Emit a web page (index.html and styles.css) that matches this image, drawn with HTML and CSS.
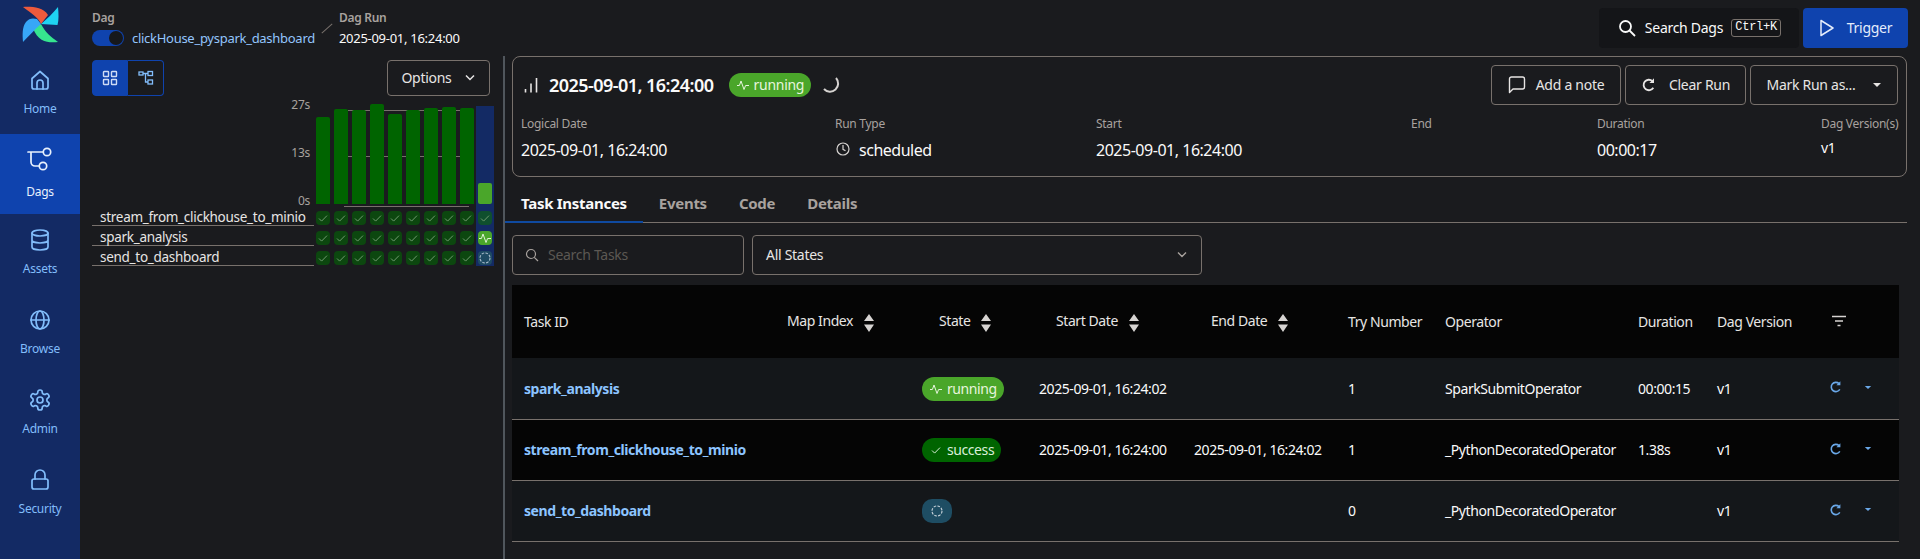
FILE: index.html
```html
<!DOCTYPE html>
<html lang="en">
<head>
    <meta charset="UTF-8">
    <title>clickHouse_pyspark_dashboard - Airflow</title>
    <link rel="stylesheet" href="styles.css">
</head>
<body>
    <svg class="defs" width="0" height="0">
        <symbol id="i-check" viewBox="0 0 14 14"><path d="M3 7.5l2.6 2.6L11 4.6" fill="none" stroke="currentColor" stroke-width="1"/></symbol>
        <symbol id="i-sort" viewBox="0 0 12 20"><path d="M6 1l5 7H1zM1 11.5h10L6 19z" fill="currentColor"/></symbol>
        <symbol id="i-refresh" viewBox="0 0 14 14"><path d="M10.8 9.4A4.6 4.6 0 1 1 10 3.6" fill="none" stroke="currentColor" stroke-width="1.6"/><path d="M11.4 1.2v4h-4z" fill="currentColor"/></symbol>
        <symbol id="i-caret" viewBox="0 0 10 6"><path d="M1 1h8L5 5z" fill="currentColor"/></symbol>
        <symbol id="i-pulse" viewBox="0 0 14 14"><path d="M1 7.5h2.4L5 3l3 8.5 1.6-4h3.4" fill="none" stroke="currentColor" stroke-width="1"/></symbol>
        <symbol id="i-queued" viewBox="0 0 14 14"><circle cx="7" cy="7" r="5" fill="none" stroke="currentColor" stroke-width="1.1" stroke-dasharray="2.6 1.3"/></symbol>
    </svg>

    <nav class="sidebar">
        <div class="logo">
            <svg width="35" height="35" viewBox="0 0 35 35">
                <path d="M35 0C35.6 6 36 13 34.5 18L18 17C24 12 30 6 35 0Z" fill="#1fd3f2"/>
                <path d="M35 35C27 36 15 36 10 21L18 17C22 25 28 30 35 35Z" fill="#36e58f"/>
                <path d="M0 35C-.5 28-1 20 3 15C6 11 10 11 14 12L18 17C12 22 6 29 0 35Z" fill="#37a7f8"/>
                <path d="M0 0C8-.5 20 0 25 8L18 17C15 10 8 6 0 0Z" fill="#ee5a3c"/>
            </svg>
        </div>
        <a class="nav-item">
            <svg width="24" height="24" viewBox="0 0 24 24" class="stroke-icon"><path d="M4 10.5L12 3.5l8 7V19a2 2 0 0 1-2 2H6a2 2 0 0 1-2-2z"/><path d="M9 21v-6a3 3 0 0 1 6 0v6"/></svg>
            <span>Home</span>
        </a>
        <a class="nav-item active">
            <svg width="28" height="28" viewBox="0 0 28 28" class="stroke-icon"><path d="M2 7h15M5 7v10a4 4 0 0 0 4 4h4"/><circle cx="21" cy="7" r="3.7"/><circle cx="17" cy="21" r="3.7"/></svg>
            <span>Dags</span>
        </a>
        <a class="nav-item">
            <svg width="24" height="24" viewBox="0 0 24 24" class="stroke-icon"><ellipse cx="12" cy="5" rx="8" ry="3"/><path d="M4 5v14c0 1.7 3.6 3 8 3s8-1.300 8-3V5M4 12c0 1.700 3.600 3 8 3s8-1.300 8-3"/></svg>
            <span>Assets</span>
        </a>
        <a class="nav-item">
            <svg width="24" height="24" viewBox="0 0 24 24" class="stroke-icon"><circle cx="12" cy="12" r="9"/><ellipse cx="12" cy="12" rx="4" ry="9"/><path d="M3 12h18"/></svg>
            <span>Browse</span>
        </a>
        <a class="nav-item">
            <svg width="24" height="24" viewBox="0 0 24 24" class="stroke-icon"><path d="M12.220 2h-.44a2 2 0 0 0-2 2v.18a2 2 0 0 1-1 1.730l-.43.25a2 2 0 0 1-2 0l-.15-.08a2 2 0 0 0-2.730.73l-.22.38a2 2 0 0 0 .73 2.730l.15.1a2 2 0 0 1 1 1.720v.51a2 2 0 0 1-1 1.740l-.15.09a2 2 0 0 0-.73 2.730l.22.38a2 2 0 0 0 2.730.73l.15-.08a2 2 0 0 1 2 0l.43.25a2 2 0 0 1 1 1.730V20a2 2 0 0 0 2 2h.44a2 2 0 0 0 2-2v-.18a2 2 0 0 1 1-1.730l.43-.25a2 2 0 0 1 2 0l.15.08a2 2 0 0 0 2.730-.73l.22-.39a2 2 0 0 0-.73-2.730l-.15-.08a2 2 0 0 1-1-1.740v-.5a2 2 0 0 1 1-1.740l.15-.09a2 2 0 0 0 .73-2.730l-.22-.38a2 2 0 0 0-2.730-.73l-.15.08a2 2 0 0 1-2 0l-.43-.25a2 2 0 0 1-1-1.730V4a2 2 0 0 0-2-2z"/><circle cx="12" cy="12" r="3"/></svg>
            <span>Admin</span>
        </a>
        <a class="nav-item">
            <svg width="24" height="24" viewBox="0 0 24 24" class="stroke-icon"><rect x="4" y="11" width="16" height="10" rx="2"/><path d="M7 11V7a5 5 0 0 1 10 0v4"/></svg>
            <span>Security</span>
        </a>
    </nav>

    <div class="main">
        <header class="topbar">
            <div class="crumbs">
                <div class="crumb">
                    <div class="crumb-label">Dag</div>
                    <div class="crumb-value">
                        <span class="switch"><span class="knob"></span></span>
                        <a class="dag-link">clickHouse_pyspark_dashboard</a>
                    </div>
                </div>
                <span class="crumb-slash"></span>
                <div class="crumb">
                    <div class="crumb-label">Dag Run</div>
                    <div class="crumb-value">2025-09-01, 16:24:00</div>
                </div>
            </div>
            <div class="top-actions">
                <button class="search-btn">
                    <svg width="20" height="20" viewBox="0 0 20 20" fill="none" stroke="currentColor" stroke-width="1.800"><circle cx="8.500" cy="8.500" r="5.500"/><path d="M12.500 12.500L18 18"/></svg>
                    <span>Search Dags</span>
                    <kbd>Ctrl+K</kbd>
                </button>
                <button class="trigger-btn">
                    <svg width="16" height="20" viewBox="0 0 16 20" fill="none" stroke="currentColor" stroke-width="1.500"><path d="M2 2.500L14 10 2 17.500z" stroke-linejoin="round"/></svg>
                    <span>Trigger</span>
                </button>
            </div>
        </header>

        <div class="content">
            <section class="grid-panel">
                <div class="grid-tools">
                    <div class="view-toggle">
                        <span class="view-btn on">
                            <svg width="16" height="16" viewBox="0 0 16 16" fill="none" stroke="currentColor" stroke-width="1.400"><rect x="1.500" y="1.500" width="5" height="5" rx=".6"/><rect x="9.500" y="1.500" width="5" height="5" rx=".6"/><rect x="1.500" y="9.500" width="5" height="5" rx=".6"/><rect x="9.500" y="9.500" width="5" height="5" rx=".6"/></svg>
                        </span>
                        <span class="view-btn">
                            <svg width="16" height="16" viewBox="0 0 16 16" fill="none" stroke="currentColor" stroke-width="1.300"><rect x="1" y="2" width="4" height="3"/><rect x="10" y="1.500" width="4.500" height="4"/><rect x="10" y="10" width="4.500" height="4"/><path d="M5 3.500h5M7.500 3.500v8.500H10"/></svg>
                        </span>
                    </div>
                    <button class="outline-btn options-btn">
                        <span>Options</span>
                        <svg width="12" height="8" viewBox="0 0 12 8" fill="none" stroke="currentColor" stroke-width="1.500"><path d="M2 1.500l4 4 4-4"/></svg>
                    </button>
                </div>

                <div class="chart">
                    <span class="gridline g-top"></span>
                    <span class="gridline g-mid"></span>
                    <span class="gridline g-base"></span>

                    <div class="chart-left">
                        <div class="y-axis">
                            <span>27s</span>
                            <span>13s</span>
                            <span>0s</span>
                        </div>
                        <div class="task-name">stream_from_clickhouse_to_minio</div>
                        <div class="task-name">spark_analysis</div>
                        <div class="task-name">send_to_dashboard</div>
                    </div>

                    <div class="run-col"><div class="bar-slot"><div class="bar" style="height: 87px"></div></div><div class="cell"><svg class="tick"><use href="#i-check"/></svg></div><div class="cell"><svg class="tick"><use href="#i-check"/></svg></div><div class="cell"><svg class="tick"><use href="#i-check"/></svg></div></div>
                    <div class="run-col"><div class="bar-slot"><div class="bar" style="height: 95px"></div></div><div class="cell"><svg class="tick"><use href="#i-check"/></svg></div><div class="cell"><svg class="tick"><use href="#i-check"/></svg></div><div class="cell"><svg class="tick"><use href="#i-check"/></svg></div></div>
                    <div class="run-col"><div class="bar-slot"><div class="bar" style="height: 94px"></div></div><div class="cell"><svg class="tick"><use href="#i-check"/></svg></div><div class="cell"><svg class="tick"><use href="#i-check"/></svg></div><div class="cell"><svg class="tick"><use href="#i-check"/></svg></div></div>
                    <div class="run-col"><div class="bar-slot"><div class="bar" style="height: 100px"></div></div><div class="cell"><svg class="tick"><use href="#i-check"/></svg></div><div class="cell"><svg class="tick"><use href="#i-check"/></svg></div><div class="cell"><svg class="tick"><use href="#i-check"/></svg></div></div>
                    <div class="run-col"><div class="bar-slot"><div class="bar" style="height: 90px"></div></div><div class="cell"><svg class="tick"><use href="#i-check"/></svg></div><div class="cell"><svg class="tick"><use href="#i-check"/></svg></div><div class="cell"><svg class="tick"><use href="#i-check"/></svg></div></div>
                    <div class="run-col"><div class="bar-slot"><div class="bar" style="height: 94px"></div></div><div class="cell"><svg class="tick"><use href="#i-check"/></svg></div><div class="cell"><svg class="tick"><use href="#i-check"/></svg></div><div class="cell"><svg class="tick"><use href="#i-check"/></svg></div></div>
                    <div class="run-col"><div class="bar-slot"><div class="bar" style="height: 96px"></div></div><div class="cell"><svg class="tick"><use href="#i-check"/></svg></div><div class="cell"><svg class="tick"><use href="#i-check"/></svg></div><div class="cell"><svg class="tick"><use href="#i-check"/></svg></div></div>
                    <div class="run-col"><div class="bar-slot"><div class="bar" style="height: 97px"></div></div><div class="cell"><svg class="tick"><use href="#i-check"/></svg></div><div class="cell"><svg class="tick"><use href="#i-check"/></svg></div><div class="cell"><svg class="tick"><use href="#i-check"/></svg></div></div>
                    <div class="run-col"><div class="bar-slot"><div class="bar" style="height: 96px"></div></div><div class="cell"><svg class="tick"><use href="#i-check"/></svg></div><div class="cell"><svg class="tick"><use href="#i-check"/></svg></div><div class="cell"><svg class="tick"><use href="#i-check"/></svg></div></div>
                    <div class="run-col current">
                        <div class="bar-slot"><div class="bar running" style="height: 21px"></div></div>
                        <div class="cell done-now"><svg class="tick"><use href="#i-check"/></svg></div>
                        <div class="cell run-now"><svg class="tick"><use href="#i-pulse"/></svg></div>
                        <div class="cell wait-now"><svg class="tick"><use href="#i-queued"/></svg></div>
                    </div>
                </div>
            </section>

            <div class="splitter"></div>

            <section class="detail">
                <div class="run-card">
                    <div class="run-head">
                        <div class="run-title">
                            <svg width="14" height="16" viewBox="0 0 14 16" fill="none" stroke="#e7e5e4" stroke-width="1.600"><path d="M1.500 12v3.500M7 6.500v9M12.500 1v14.500"/></svg>
                            <h1>2025-09-01, 16:24:00</h1>
                            <span class="badge running"><svg width="14" height="14"><use href="#i-pulse"/></svg>running</span>
                            <svg class="spinner" width="20" height="20" viewBox="0 0 20 20" fill="none" stroke="#d6d3d1" stroke-width="2"><path d="M15 3a8 8 0 0 1-12 11"/></svg>
                        </div>
                        <div class="run-actions">
                            <button class="outline-btn action-btn note">
                                <svg width="18" height="18" viewBox="0 0 18 18" fill="none" stroke="currentColor" stroke-width="1.400"><path d="M1.500 3a2 2 0 0 1 2-2h11a2 2 0 0 1 2 2v8a2 2 0 0 1-2 2H5l-3.500 3.500z" stroke-linejoin="round"/></svg>
                                <span>Add a note</span>
                            </button>
                            <button class="outline-btn action-btn clear">
                                <svg width="16" height="16" class="refresh-lg"><use href="#i-refresh"/></svg>
                                <span>Clear Run</span>
                            </button>
                            <button class="outline-btn action-btn mark">
                                <span>Mark Run as...</span>
                                <svg width="10" height="6"><use href="#i-caret"/></svg>
                            </button>
                        </div>
                    </div>
                    <dl class="meta">
                        <div><dt>Logical Date</dt><dd>2025-09-01, 16:24:00</dd></div>
                        <div>
                            <dt>Run Type</dt>
                            <dd class="with-icon"><svg width="16" height="16" viewBox="0 0 16 16" fill="none" stroke="currentColor" stroke-width="1.200"><circle cx="8" cy="8" r="6"/><path d="M8 4v4.300l2.500 1.400"/></svg>scheduled</dd>
                        </div>
                        <div><dt>Start</dt><dd>2025-09-01, 16:24:00</dd></div>
                        <div><dt>End</dt><dd></dd></div>
                        <div><dt>Duration</dt><dd>00:00:17</dd></div>
                        <div><dt>Dag Version(s)</dt><dd class="small">v1</dd></div>
                    </dl>
                </div>

                <div class="tabs">
                    <a class="tab active">Task Instances</a>
                    <a class="tab">Events</a>
                    <a class="tab">Code</a>
                    <a class="tab">Details</a>
                </div>

                <div class="filters">
                    <div class="field search-field">
                        <svg width="14" height="14" viewBox="0 0 14 14" fill="none" stroke="currentColor" stroke-width="1.200"><circle cx="6" cy="6" r="4.500"/><path d="M9.300 9.300L13 13"/></svg>
                        <span>Search Tasks</span>
                    </div>
                    <div class="field state-field">
                        <span>All States</span>
                        <svg width="12" height="8" viewBox="0 0 12 8" fill="none" stroke="currentColor" stroke-width="1.400"><path d="M2 1.500l4 4 4-4"/></svg>
                    </div>
                </div>

                <table class="tasks">
                    <colgroup>
                        <col class="c-id"><col class="c-map"><col class="c-state"><col class="c-start"><col class="c-end"><col class="c-try"><col class="c-op"><col class="c-dur"><col class="c-ver"><col class="c-clear"><col class="c-more">
                    </colgroup>
                    <thead>
                        <tr>
                            <th>Task ID</th>
                            <th class="th-map">Map Index<svg class="sort"><use href="#i-sort"/></svg></th>
                            <th class="th-state">State<svg class="sort"><use href="#i-sort"/></svg></th>
                            <th class="th-start">Start Date<svg class="sort"><use href="#i-sort"/></svg></th>
                            <th class="th-end">End Date<svg class="sort"><use href="#i-sort"/></svg></th>
                            <th>Try Number</th>
                            <th>Operator</th>
                            <th>Duration</th>
                            <th>Dag Version</th>
                            <th colspan="2" class="th-filter"><svg width="18" height="12" viewBox="0 0 16 12" fill="none" stroke="currentColor" stroke-width="1.500"><path d="M1 1.500h14M4 6h8M6.500 10.500h3"/></svg></th>
                        </tr>
                    </thead>
                    <tbody>
                        <tr>
                            <td><a class="task-link">spark_analysis</a></td>
                            <td></td>
                            <td><span class="badge running"><svg width="14" height="14"><use href="#i-pulse"/></svg>running</span></td>
                            <td>2025-09-01, 16:24:02</td>
                            <td></td>
                            <td>1</td>
                            <td>SparkSubmitOperator</td>
                            <td>00:00:15</td>
                            <td>v1</td>
                            <td class="row-icon"><svg width="14" height="14"><use href="#i-refresh"/></svg></td>
                            <td class="row-icon"><svg width="8" height="5"><use href="#i-caret"/></svg></td>
                        </tr>
                        <tr>
                            <td><a class="task-link">stream_from_clickhouse_to_minio</a></td>
                            <td></td>
                            <td><span class="badge success"><svg width="14" height="14"><use href="#i-check"/></svg>success</span></td>
                            <td>2025-09-01, 16:24:00</td>
                            <td>2025-09-01, 16:24:02</td>
                            <td>1</td>
                            <td>_PythonDecoratedOperator</td>
                            <td>1.38s</td>
                            <td>v1</td>
                            <td class="row-icon"><svg width="14" height="14"><use href="#i-refresh"/></svg></td>
                            <td class="row-icon"><svg width="8" height="5"><use href="#i-caret"/></svg></td>
                        </tr>
                        <tr>
                            <td><a class="task-link">send_to_dashboard</a></td>
                            <td></td>
                            <td><span class="badge queued"><svg width="14" height="14"><use href="#i-queued"/></svg></span></td>
                            <td></td>
                            <td></td>
                            <td>0</td>
                            <td>_PythonDecoratedOperator</td>
                            <td></td>
                            <td>v1</td>
                            <td class="row-icon"><svg width="14" height="14"><use href="#i-refresh"/></svg></td>
                            <td class="row-icon"><svg width="8" height="5"><use href="#i-caret"/></svg></td>
                        </tr>
                    </tbody>
                </table>
            </section>
        </div>
    </div>
</body>
</html>
```

FILE: styles.css
```css
* {
    box-sizing: border-box;
}
html, body {
    height: 100%;
}
body {
    margin: 0;
    display: flex;
    overflow: hidden;
    background-color: #1a1b1e;
    color: #fafafa;
    font-family: "Noto Sans", "Open Sans", Arial, sans-serif;
    font-size: 14px;
    letter-spacing: -0.02em;
    line-height: 20px;
}
button {
    font: inherit;
    letter-spacing: inherit;
    color: inherit;
    background: none;
    border: none;
    padding: 0;
}
.defs {
    position: absolute;
}

/* sidebar */
.sidebar {
    width: 80px;
    flex: none;
    background-color: #132a64;
}
.logo {
    height: 54px;
    padding: 7px 0 0 23px;
}
.logo svg {
    display: block;
    overflow: visible;
}
.nav-item {
    height: 80px;
    padding-bottom: 2px;
    display: flex;
    flex-direction: column;
    align-items: center;
    justify-content: center;
    gap: 8px;
    color: #82bdfb;
    font-size: 12px;
    line-height: 18px;
}
.nav-item.active {
    gap: 10px;
    background-color: #0f43ae;
    color: #e8f1fd;
}
.stroke-icon {
    fill: none;
    stroke: currentColor;
    stroke-width: 1.7;
    stroke-linecap: round;
    stroke-linejoin: round;
}

/* top bar */
.main {
    flex: 1;
    min-width: 0;
    display: flex;
    flex-direction: column;
}
.topbar {
    height: 54px;
    flex: none;
    display: flex;
    justify-content: space-between;
    padding: 8px 12px;
}
.crumbs {
    display: flex;
    align-items: flex-start;
}
.crumb-label {
    color: #a8a29e;
    font-size: 12px;
    font-weight: 600;
    line-height: 20px;
}
.crumb-value {
    display: flex;
    align-items: center;
    gap: 8px;
    height: 20px;
    font-size: 13px;
}
.crumb-slash {
    width: 14px;
    height: 1px;
    margin: 20px 5px 0 5px;
    background-color: #78716c;
    transform: rotate(-42deg);
}
.switch {
    width: 32px;
    height: 16px;
    padding: 1px;
    display: flex;
    justify-content: flex-end;
    border-radius: 8px;
    background-color: #0f43ae;
}
.knob {
    width: 14px;
    height: 14px;
    border-radius: 50%;
    background-color: #16181c;
}
.dag-link {
    color: #93c5fd;
}
.top-actions {
    display: flex;
    gap: 4px;
}
.search-btn {
    width: 200px;
    height: 40px;
    display: flex;
    align-items: center;
    justify-content: center;
    gap: 8px;
    border-radius: 4px;
    background-color: #141518;
}
kbd {
    width: 50px;
    height: 18px;
    border: 1px solid #78716c;
    border-radius: 3px;
    font-family: "Liberation Mono", monospace;
    font-size: 12px;
    letter-spacing: -0.02em;
    line-height: 14px;
    text-align: center;
}
.trigger-btn {
    width: 105px;
    height: 40px;
    display: flex;
    align-items: center;
    justify-content: center;
    gap: 12px;
    border-radius: 4px;
    background-color: #0f43ae;
    color: #e4ecfb;
}

/* left panel */
.content {
    flex: 1;
    min-height: 0;
    display: flex;
}
.grid-panel {
    width: 423px;
    flex: none;
    padding: 6px 13px 0 12px;
}
.grid-tools {
    display: flex;
    justify-content: space-between;
}
.view-toggle {
    display: flex;
}
.view-btn {
    width: 36px;
    height: 36px;
    display: flex;
    align-items: center;
    justify-content: center;
    border: 1px solid #0f43ae;
    border-left: none;
    border-radius: 0 4px 4px 0;
    color: #82bdfb;
}
.view-btn.on {
    border-left: 1px solid #0f43ae;
    border-radius: 4px 0 0 4px;
    background-color: #0f43ae;
    color: #cfdcf5;
}
.outline-btn {
    display: flex;
    align-items: center;
    border: 1px solid #78716c;
    border-radius: 4px;
    color: #e7e5e4;
}
.options-btn {
    width: 103px;
    height: 36px;
    justify-content: center;
    gap: 12px;
}
.chart {
    position: relative;
    display: flex;
    width: 402px;
}
.gridline {
    position: absolute;
    height: 1px;
    background-color: #78716c;
}
.g-top {
    top: 14px;
    left: 256px;
    width: 112px;
}
.g-mid {
    top: 60px;
    left: 256px;
    width: 112px;
}
.g-base {
    top: 110px;
    left: 252px;
    width: 125px;
}
.chart-left {
    width: 222px;
    flex: none;
}
.y-axis {
    height: 114px;
    margin-bottom: -4px;
    padding-right: 4px;
    display: flex;
    flex-direction: column;
    justify-content: space-between;
    align-items: flex-end;
    color: #a8a29e;
    font-size: 12px;
    line-height: 18px;
}
.task-name {
    height: 20px;
    padding-left: 8px;
    border-bottom: 1px solid #78716c;
    font-size: 13.5px;
    line-height: 22px;
    color: #e7e5e4;
    white-space: nowrap;
}
.run-col {
    position: relative;
    width: 18px;
    flex: none;
}
.bar-slot {
    height: 110px;
    padding: 0 2px 2px;
    display: flex;
    align-items: flex-end;
}
.bar {
    width: 14px;
    border-radius: 2px 2px 0 0;
    background-color: #006400;
}
.bar.running {
    border-radius: 2px;
    background-color: #4aa62a;
}
.run-col.current {
    background: linear-gradient(#132a64, #132a64) 0 10px / 18px 160px no-repeat;
}
.cell {
    position: relative;
    width: 14px;
    height: 14px;
    margin: 6px 2px 0;
    display: flex;
    border-radius: 4px;
    background-color: #0c470f;
    color: #6f9a6f;
}
.cell:nth-child(2) {
    margin-top: 5px;
}
.cell.done-now {
    background-color: #0f4f2e;
}
.cell.run-now {
    background-color: #4aa62a;
    color: #dff2d6;
}
.cell.wait-now {
    background-color: #1e4a63;
    color: #a9bccb;
}
.tick {
    width: 14px;
    height: 14px;
}
.splitter {
    width: 2px;
    flex: none;
    background-color: #50565c;
    margin-top: 2px;
}

/* right panel */
.detail {
    flex: 1;
    min-width: 0;
    padding: 2px 13px 0 7px;
}
.run-card {
    height: 121px;
    padding: 8px 8px 0;
    border: 1px solid #78716c;
    border-radius: 8px;
}
.run-head {
    display: flex;
    justify-content: space-between;
    height: 40px;
}
.run-title {
    display: flex;
    align-items: center;
    padding-left: 3px;
}
.run-title h1 {
    margin: 0 15px 0 11px;
    font-size: 18px;
    font-weight: 600;
    letter-spacing: -0.03em;
    line-height: 24px;
}
.spinner {
    margin-left: 10px;
}
.badge {
    display: inline-flex;
    align-items: center;
    gap: 4px;
    height: 24px;
    padding: 0 7px;
    border-radius: 12px;
    font-size: 14px;
    line-height: 24px;
    color: #e7f5de;
}
.badge svg {
    flex: none;
}
.badge.running {
    background-color: #4aa62a;
}
.badge.success {
    background-color: #006400;
    color: #d9efd9;
}
.badge.queued {
    width: 30px;
    padding: 0 8px;
    border-radius: 10px;
    background-color: #1e4d63;
    color: #cbd5dd;
}
.run-actions {
    display: flex;
    gap: 4px;
}
.action-btn {
    height: 40px;
    justify-content: center;
    gap: 10px;
}
.note {
    width: 130px;
}
.clear {
    width: 121px;
}
.mark {
    width: 148px;
    gap: 16px;
}
.refresh-lg {
    margin-right: 2px;
}
.meta {
    margin: 9px 0 0;
    display: grid;
    grid-template-columns: 314px 261px 315px 186px 224px 1fr;
}
.meta dt {
    color: #a8a29e;
    font-size: 12px;
    white-space: nowrap;
}
.meta dd {
    margin: 6px 0 0;
    font-size: 16px;
    letter-spacing: -0.03em;
    line-height: 20px;
}
.meta dd.small {
    margin-top: 4px;
    font-size: 14px;
}
.with-icon {
    display: flex;
    align-items: center;
    gap: 8px;
}
.with-icon svg {
    color: #d6d3d1;
    margin-top: -2px;
}

.tabs {
    height: 46px;
    margin-left: -7px;
    display: flex;
    border-bottom: 1px solid #78716c;
}
.tab {
    height: 46px;
    padding: 16px 16px 0;
    color: #a8a29e;
    font-size: 15px;
    font-weight: 700;
}
.tab.active {
    color: #fafafa;
    border-bottom: 2px solid #0f4aa0;
}
.filters {
    display: flex;
    gap: 8px;
    margin-top: 12px;
}
.field {
    height: 40px;
    display: flex;
    align-items: center;
    border: 1px solid #78716c;
    border-radius: 4px;
}
.search-field {
    width: 232px;
    padding-left: 12px;
    gap: 9px;
    color: #5c5853;
}
.search-field svg {
    color: #a8a29e;
}
.state-field {
    width: 450px;
    padding: 0 13px;
    justify-content: space-between;
    color: #e7e5e4;
}
.state-field svg {
    color: #a8a29e;
}

/* task table */
.tasks {
    width: 1387px;
    margin-top: 10px;
    border-collapse: collapse;
    table-layout: fixed;
    letter-spacing: -0.03em;
}
.c-id { width: 263px; }
.c-map { width: 135px; }
.c-state { width: 117px; }
.c-start { width: 155px; }
.c-end { width: 154px; }
.c-try { width: 97px; }
.c-op { width: 193px; }
.c-dur { width: 79px; }
.c-ver { width: 115px; }
.c-clear { width: 35px; }
.tasks th {
    height: 73px;
    padding: 1px 0 0 12px;
    background-color: #050505;
    color: #e7e5e4;
    font-weight: 400;
    text-align: left;
    white-space: nowrap;
}
.tasks .th-map { padding-left: 12px; }
.tasks .th-state { padding-left: 29px; }
.tasks .th-start { padding-left: 29px; }
.tasks .th-end { padding-left: 29px; }
.tasks .th-filter { padding-left: 10px; color: #d6d3d1; }
.sort {
    width: 12px;
    height: 20px;
    margin-left: 10px;
    vertical-align: middle;
    color: #d6d3d1;
}
.tasks td {
    height: 61px;
    padding: 1px 0 0 12px;
    border-bottom: 1px solid #78716c;
    background-color: #14171a;
    white-space: nowrap;
}
.tasks tbody tr:nth-child(2) td {
    background-color: #050505;
}
.task-link {
    color: #8cc4ff;
    font-weight: 700;
}
.tasks td.row-icon {
    padding: 0 0 2px 9px;
    color: #6aa8e8;
}
.row-icon svg {
    display: block;
}
```
